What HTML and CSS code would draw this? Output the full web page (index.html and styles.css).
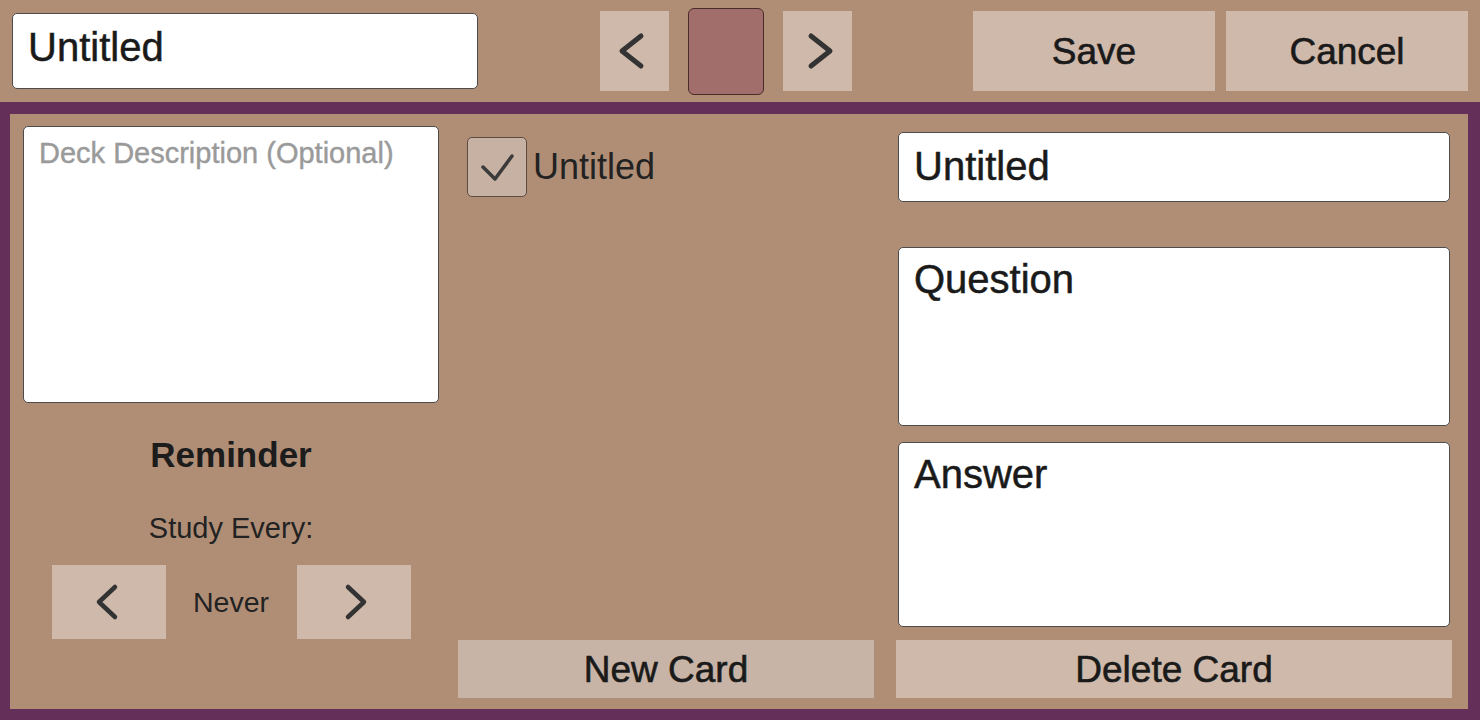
FILE: index.html
```html
<!DOCTYPE html>
<html lang="en">
<head>
<meta charset="utf-8">
<title>Deck Editor</title>
<link rel="stylesheet" href="styles.css">
</head>
<body>
<div class="topbar">
  <div class="field title-field">Untitled</div>
  <div class="nav">
    <button class="btn nav-btn" aria-label="Previous colour">
      <svg width="69" height="80" viewBox="0 0 69 80"><path d="M41 25 L22 40 L41 55" fill="none" stroke="#333" stroke-width="5" stroke-linecap="round" stroke-linejoin="round"/></svg>
    </button>
    <div class="swatch"></div>
    <button class="btn nav-btn" aria-label="Next colour">
      <svg width="69" height="80" viewBox="0 0 69 80"><path d="M28 25 L47 40 L28 55" fill="none" stroke="#333" stroke-width="5" stroke-linecap="round" stroke-linejoin="round"/></svg>
    </button>
  </div>
  <div class="actions">
    <button class="btn action-btn">Save</button>
    <button class="btn action-btn">Cancel</button>
  </div>
</div>
<div class="frame">
  <div class="col col-left">
    <div class="field desc">Deck Description (Optional)</div>
    <div class="reminder-title">Reminder</div>
    <div class="study-label">Study Every:</div>
    <div class="stepper">
      <button class="btn step-btn" aria-label="Previous">
        <svg width="114" height="74" viewBox="0 0 114 74"><path d="M63 22 L47 37 L63 52" fill="none" stroke="#333" stroke-width="4.5" stroke-linecap="round" stroke-linejoin="round"/></svg>
      </button>
      <span class="step-value">Never</span>
      <button class="btn step-btn" aria-label="Next">
        <svg width="114" height="74" viewBox="0 0 114 74"><path d="M51 22 L67 37 L51 52" fill="none" stroke="#333" stroke-width="4.5" stroke-linecap="round" stroke-linejoin="round"/></svg>
      </button>
    </div>
  </div>
  <div class="col col-mid">
    <div class="card-item">
      <span class="checkbox">
        <svg width="58" height="58" viewBox="0 0 58 58"><path d="M15 29 L27 41 L44 18" fill="none" stroke="#3b3b3b" stroke-width="3.5" stroke-linecap="round" stroke-linejoin="round"/></svg>
      </span>
      <span class="card-label">Untitled</span>
    </div>
    <button class="btn bottom-btn new-card">New Card</button>
  </div>
  <div class="col col-right">
    <div class="field card-title">Untitled</div>
    <div class="field multiline question">Question</div>
    <div class="field multiline answer">Answer</div>
    <button class="btn bottom-btn delete-card">Delete Card</button>
  </div>
</div>
</body>
</html>
```
FILE: styles.css
```css
* {
  box-sizing: border-box;
}

html, body {
  margin: 0;
  padding: 0;
}

body {
  width: 1480px;
  height: 720px;
  overflow: hidden;
  background: #b08e76;
  font-family: "Liberation Sans", Arial, sans-serif;
  color: #1c1c1c;
}

.btn {
  border: none;
  margin: 0;
  padding: 0;
  background: #cfb9ab;
  font-family: "Liberation Sans", Arial, sans-serif;
  color: #1a1a1a;
  -webkit-text-stroke: 0.6px #1a1a1a;
  display: flex;
  align-items: center;
  justify-content: center;
  cursor: pointer;
}

.btn svg {
  display: block;
}

.field {
  background: #ffffff;
  border: 1px solid #4c4c4c;
  border-radius: 5px;
  color: #1a1a1a;
  -webkit-text-stroke: 0.5px #1a1a1a;
  font-size: 40px;
  line-height: 40px;
  padding: 13px 14px 0 15px;
  white-space: nowrap;
  overflow: hidden;
}

/* Top bar */
.topbar {
  height: 102px;
  padding: 0 12px;
  display: flex;
  align-items: center;
}

.title-field {
  width: 466px;
  height: 76px;
}

.nav {
  margin-left: 122px;
  display: flex;
  align-items: center;
  gap: 19px;
}

.nav-btn {
  width: 69px;
  height: 80px;
}

.swatch {
  width: 76px;
  height: 87px;
  background: #a16e6c;
  border: 1px solid #4a2b29;
  border-radius: 6px;
}

.actions {
  margin-left: auto;
  display: flex;
  gap: 11px;
}

.action-btn {
  width: 242px;
  height: 80px;
  font-size: 37px;
  line-height: 37px;
}

/* Main frame */
.frame {
  height: 618px;
  border-style: solid;
  border-color: #64305a;
  border-width: 12px 12px 11px 10px;
  padding: 12px 16px 11px 13px;
  display: flex;
}

.col {
  display: flex;
  flex-direction: column;
}

.col-left {
  width: 416px;
  align-items: center;
}

.col-mid {
  width: 416px;
  margin-left: 19px;
}

.col-right {
  width: 556px;
  margin-left: 22px;
}

/* Left column */
.desc {
  width: 416px;
  height: 277px;
  font-size: 29px;
  line-height: 29px;
  color: #9a9a9a;
  -webkit-text-stroke: 0.4px #9a9a9a;
  padding: 12px 12px 0 15px;
}

.reminder-title {
  margin-top: 34px;
  font-size: 35px;
  line-height: 35px;
  font-weight: bold;
  color: #1c1c1c;
}

.study-label {
  margin-top: 42px;
  font-size: 29px;
  line-height: 28px;
  color: #222;
}

.stepper {
  margin-top: 23px;
  display: flex;
  align-items: center;
}

.step-btn {
  width: 114px;
  height: 74px;
}

.step-value {
  width: 131px;
  text-align: center;
  font-size: 28.5px;
  line-height: 28px;
  color: #222;
}

/* Middle column */
.card-item {
  margin-top: 11px;
  margin-left: 9px;
  display: flex;
  align-items: center;
  gap: 6px;
}

.checkbox {
  width: 60px;
  height: 60px;
  background: #c6b1a3;
  border: 1px solid #5c4b43;
  border-radius: 5px;
  display: flex;
}

.card-label {
  font-size: 36px;
  line-height: 36px;
  color: #222;
}

.bottom-btn {
  margin-top: auto;
  height: 58px;
  font-size: 37px;
  line-height: 37px;
}

.new-card {
  width: 416px;
  background: #c8b4a6;
}

.delete-card {
  width: 556px;
}

/* Right column */
.card-title {
  margin: 6px 2px 0;
  height: 70px;
}

.multiline {
  margin-left: 2px;
  margin-right: 2px;
  padding-top: 11px;
}

.question {
  margin-top: 45px;
  height: 179px;
}

.answer {
  margin-top: 16px;
  height: 185px;
}

.delete-card {
  margin-top: 13px;
}
```
